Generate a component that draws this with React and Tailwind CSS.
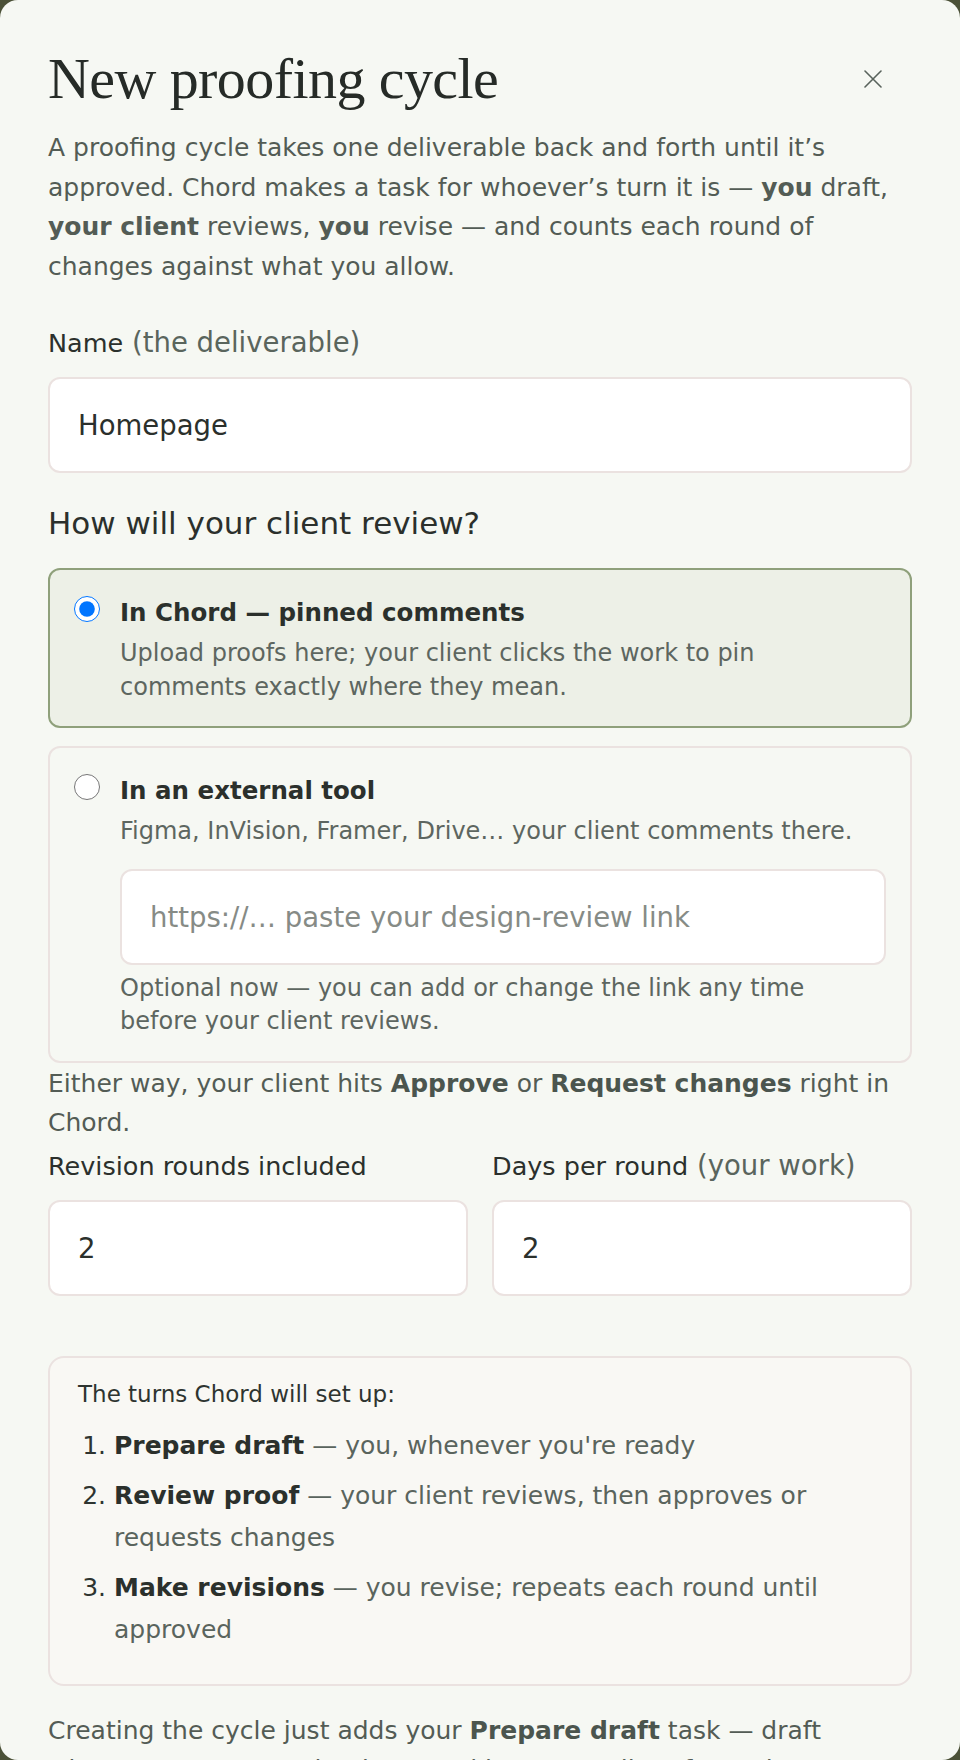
import React from "react";

const body = "font-['DejaVu_Sans',sans-serif]";

const Radio = ({ checked }) => (
  <input
    type="radio"
    name="review-mode"
    checked={checked}
    readOnly
    className="w-[26px] h-[26px] shrink-0 m-0 mt-px accent-[#0075ff]"
  />
);

const Field = ({ label, hint, value, placeholder, className = "" }) => (
  <div className={className}>
    <label className="block text-[25.5px] leading-[36px] font-medium text-[#2b302c]">
      {label}
      {hint && (
        <span className="font-normal text-[27.5px] leading-none text-[#5a655d]">
          {" "}
          {hint}
        </span>
      )}
    </label>
    <input
      type="text"
      defaultValue={value}
      placeholder={placeholder}
      className="mt-4 block w-full h-24 px-[28px] rounded-[12px] border-2 border-[#ebe2e0] bg-white text-[27.5px] text-[#2b302c] placeholder:text-[#868b86] outline-none"
    />
  </div>
);

export default function App() {
  return (
    <div className="w-[960px] h-[1760px] bg-[#4b5137]">
      <div
        className={`h-full rounded-[18px] overflow-hidden bg-[#f6f8f3] px-12 pt-12 ${body}`}
      >
        {/* header */}
        <div className="flex items-center justify-between">
          <h1 className="font-['Liberation_Serif',serif] text-[58px] leading-[62px] font-normal text-[#262b27] tracking-[-0.01em]">
            New proofing cycle
          </h1>
          <button className="w-10 h-10 mr-[19px] flex items-center justify-center text-[#59635c]">
            <svg width="18" height="18" viewBox="0 0 18 18" fill="none">
              <path
                d="M1 1 17 17M17 1 1 17"
                stroke="currentColor"
                strokeWidth="1.6"
                strokeLinecap="round"
              />
            </svg>
          </button>
        </div>

        <p className="mt-[18px] text-[25px] leading-[39.5px] text-[#535c55]">
          A proofing cycle takes one deliverable back and forth until it’s
          approved. Chord makes a task for whoever’s turn it is —{" "}
          <b className="font-bold">you</b> draft,{" "}
          <b className="font-bold">your client</b> reviews,{" "}
          <b className="font-bold">you</b> revise — and counts each round of
          changes against what you allow.
        </p>

        <Field
          className="mt-[39px]"
          label="Name"
          hint="(the deliverable)"
          value="Homepage"
        />

        <h2 className="mt-[29px] text-[31px] leading-[42px] font-normal text-[#2b302c]">
          How will your client review?
        </h2>

        <div className="mt-6 flex flex-col gap-[18px]">
          {/* option: in chord */}
          <div className="flex gap-5 rounded-xl border-2 border-[#8fa07b] bg-[#edf0e7] pl-6 pr-6 pt-[25px] pb-[22px]">
            <Radio checked />
            <div className="flex-1">
              <div className="text-[24.5px] leading-[36px] font-bold text-[#2b302c]">
                In Chord — pinned comments
              </div>
              <p className="mt-[6px] text-[24px] leading-[33.5px] text-[#5d6660]">
                Upload proofs here; your client clicks the work to pin
                comments exactly where they mean.
              </p>
            </div>
          </div>

          {/* option: external */}
          <div className="flex gap-5 rounded-xl border-2 border-[#ebe2e0] pl-6 pr-6 pt-[25px] pb-[22px]">
            <Radio checked={false} />
            <div className="flex-1">
              <div className="text-[24.5px] leading-[36px] font-bold text-[#2b302c]">
                In an external tool
              </div>
              <p className="mt-[6px] text-[24px] leading-[33.5px] text-[#5d6660]">
                Figma, InVision, Framer, Drive… your client comments there.
              </p>
              <input
                type="text"
                placeholder="https://… paste your design-review link"
                className="mt-5 block w-full h-24 px-[28px] rounded-[12px] border-2 border-[#ebe2e0] bg-white text-[27.5px] text-[#2b302c] placeholder:text-[#868b86] outline-none"
              />
              <p className="mt-[7px] text-[24px] leading-[33.5px] text-[#5d6660]">
                Optional now — you can add or change the link any time before
                your client reviews.
              </p>
            </div>
          </div>
        </div>

        <p className="mt-px text-[25px] leading-[39.5px] text-[#535c55]">
          Either way, your client hits{" "}
          <b className="font-bold text-[#4b554e]">Approve</b> or{" "}
          <b className="font-bold text-[#4b554e]">Request changes</b> right in
          Chord.
        </p>

        <div className="mt-[5px] grid grid-cols-2 gap-x-6">
          <Field label="Revision rounds included" value="2" />
          <Field label="Days per round" hint="(your work)" value="2" />
        </div>

        {/* summary of turns */}
        <div className="mt-[60px] rounded-2xl border-2 border-[#ebe2e0] bg-[#f9f8f4] px-[28px] pt-[19px] pb-[33px]">
          <div className="text-[23px] leading-[34px] font-normal text-[#2e3430]">
            The turns Chord will set up:
          </div>
          <ol className="mt-[14px] list-decimal pl-[36px] space-y-2 text-[25px] leading-[42px] text-[#5a645d] marker:text-[#2e3430]">
            <li>
              <b className="font-bold text-[#2b302c]">Prepare draft</b> — you,
              whenever you're ready
            </li>
            <li>
              <b className="font-bold text-[#2b302c]">Review proof</b> — your
              client reviews, then approves or requests changes
            </li>
            <li>
              <b className="font-bold text-[#2b302c]">Make revisions</b> — you
              revise; repeats each round until approved
            </li>
          </ol>
        </div>

        <p className="mt-[25px] text-[25px] leading-[39.5px] text-[#535c55]">
          Creating the cycle just adds your{" "}
          <b className="font-bold text-[#4b554e]">Prepare draft</b> task —
          draft whenever you're ready, then send it to your client for review.
        </p>
      </div>
    </div>
  );
}
